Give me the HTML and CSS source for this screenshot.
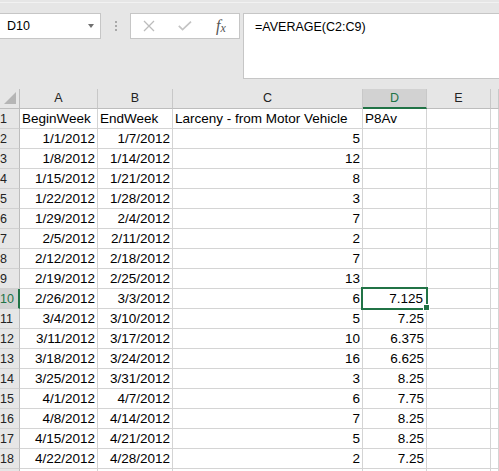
FILE: index.html
```html
<!DOCTYPE html>
<html lang="en">
<head>
  <meta charset="UTF-8">
  <title>Book1 - Excel</title>
  <link rel="stylesheet" href="styles.css">
</head>
<body>
  <!-- Ribbon edge -->
  <div class="ribbon-edge"></div>

  <!-- Name box + formula bar -->
  <div class="toolbar">
    <div class="name-box">
      <span>D10</span>
      <span class="caret"></span>
    </div>
    <div class="grip"><i></i><i></i><i></i></div>
    <div class="fx-buttons">
      <span class="btn">
        <svg width="12" height="12" viewBox="0 0 12 12"><path d="M1 1 L11 11 M11 1 L1 11" stroke="#bcbcbc" stroke-width="1.3" fill="none"/></svg>
      </span>
      <span class="btn">
        <svg width="14" height="10" viewBox="0 0 14 10"><path d="M0.8 4.8 L4.6 8.6 L13 0.6" stroke="#c4c4c4" stroke-width="1.7" fill="none"/></svg>
      </span>
      <span class="btn fx"><i>f<span>x</span></i></span>
    </div>
    <div class="formula">=AVERAGE(C2:C9)</div>
  </div>

  <!-- Sheet grid -->
  <div class="sheet">
    <div class="corner">
      <svg width="19" height="19" viewBox="0 0 19 19"><polygon points="16,3 16,15 4,15" fill="#b5b5b5"/></svg>
    </div>
    <div class="ch">A</div><div class="ch">B</div><div class="ch">C</div><div class="ch sel">D</div><div class="ch">E</div><div class="ch"></div>

    <div class="rh">1</div><div class="c">BeginWeek</div><div class="c">EndWeek</div><div class="c">Larceny - from Motor Vehicle</div><div class="c">P8Av</div><div class="c"></div><div class="c"></div>
    <div class="rh">2</div><div class="c r">1/1/2012</div><div class="c r">1/7/2012</div><div class="c r">5</div><div class="c r"></div><div class="c"></div><div class="c"></div>
    <div class="rh">3</div><div class="c r">1/8/2012</div><div class="c r">1/14/2012</div><div class="c r">12</div><div class="c r"></div><div class="c"></div><div class="c"></div>
    <div class="rh">4</div><div class="c r">1/15/2012</div><div class="c r">1/21/2012</div><div class="c r">8</div><div class="c r"></div><div class="c"></div><div class="c"></div>
    <div class="rh">5</div><div class="c r">1/22/2012</div><div class="c r">1/28/2012</div><div class="c r">3</div><div class="c r"></div><div class="c"></div><div class="c"></div>
    <div class="rh">6</div><div class="c r">1/29/2012</div><div class="c r">2/4/2012</div><div class="c r">7</div><div class="c r"></div><div class="c"></div><div class="c"></div>
    <div class="rh">7</div><div class="c r">2/5/2012</div><div class="c r">2/11/2012</div><div class="c r">2</div><div class="c r"></div><div class="c"></div><div class="c"></div>
    <div class="rh">8</div><div class="c r">2/12/2012</div><div class="c r">2/18/2012</div><div class="c r">7</div><div class="c r"></div><div class="c"></div><div class="c"></div>
    <div class="rh">9</div><div class="c r">2/19/2012</div><div class="c r">2/25/2012</div><div class="c r">13</div><div class="c r"></div><div class="c"></div><div class="c"></div>
    <div class="rh sel">10</div><div class="c r">2/26/2012</div><div class="c r">3/3/2012</div><div class="c r">6</div><div class="c r active">7.125<span class="sel-box"></span><span class="handle"></span></div><div class="c"></div><div class="c"></div>
    <div class="rh">11</div><div class="c r">3/4/2012</div><div class="c r">3/10/2012</div><div class="c r">5</div><div class="c r">7.25</div><div class="c"></div><div class="c"></div>
    <div class="rh">12</div><div class="c r">3/11/2012</div><div class="c r">3/17/2012</div><div class="c r">10</div><div class="c r">6.375</div><div class="c"></div><div class="c"></div>
    <div class="rh">13</div><div class="c r">3/18/2012</div><div class="c r">3/24/2012</div><div class="c r">16</div><div class="c r">6.625</div><div class="c"></div><div class="c"></div>
    <div class="rh">14</div><div class="c r">3/25/2012</div><div class="c r">3/31/2012</div><div class="c r">3</div><div class="c r">8.25</div><div class="c"></div><div class="c"></div>
    <div class="rh">15</div><div class="c r">4/1/2012</div><div class="c r">4/7/2012</div><div class="c r">6</div><div class="c r">7.75</div><div class="c"></div><div class="c"></div>
    <div class="rh">16</div><div class="c r">4/8/2012</div><div class="c r">4/14/2012</div><div class="c r">7</div><div class="c r">8.25</div><div class="c"></div><div class="c"></div>
    <div class="rh">17</div><div class="c r">4/15/2012</div><div class="c r">4/21/2012</div><div class="c r">5</div><div class="c r">8.25</div><div class="c"></div><div class="c"></div>
    <div class="rh">18</div><div class="c r">4/22/2012</div><div class="c r">4/28/2012</div><div class="c r">2</div><div class="c r">7.25</div><div class="c"></div><div class="c"></div>
    <div class="rh"></div><div class="c"></div><div class="c"></div><div class="c"></div><div class="c"></div><div class="c"></div><div class="c"></div>
  </div>
</body>
</html>
```

FILE: styles.css
```css
/* Reset */
* {
  margin: 0;
  padding: 0;
  box-sizing: border-box;
}

body {
  font-family: "Liberation Sans", Arial, sans-serif;
  background-color: #e6e6e6;
  color: #000;
  width: 499px;
  height: 471px;
  overflow: hidden;
}

/* Thin line under the ribbon */
.ribbon-edge {
  height: 3px;
  border-bottom: 1px solid #f2f2f2;
}

/* Name box / formula bar */
.toolbar {
  height: 86px;
  padding-top: 10px;
  display: flex;
  align-items: flex-start;
}

.name-box {
  width: 102px;
  height: 26px;
  margin-left: -1px;
  background-color: #fff;
  border: 1px solid #c6c6c6;
  display: flex;
  align-items: center;
  padding-left: 7px;
  font-size: 12.5px;
  line-height: 24px;
  color: #000;
}

.caret {
  margin-left: auto;
  margin-right: 6px;
  width: 0;
  height: 0;
  border-left: 3px solid transparent;
  border-right: 3px solid transparent;
  border-top: 4px solid #707070;
}

.grip {
  width: 29px;
  height: 26px;
  display: flex;
  flex-direction: column;
  align-items: center;
  justify-content: center;
  gap: 2px;
}

.grip i {
  width: 2px;
  height: 2px;
  background-color: #a9a9a9;
}

.fx-buttons {
  width: 110px;
  height: 26px;
  background-color: #fff;
  border: 1px solid #c6c6c6;
  display: flex;
}

.btn {
  width: 36px;
  display: flex;
  align-items: center;
  justify-content: center;
}

.fx i {
  font-family: "Liberation Serif", "Times New Roman", serif;
  font-size: 16px;
  color: #555;
  line-height: 16px;
}

.fx i span {
  font-size: 12px;
  position: relative;
  top: 1px;
}

.formula {
  flex: 1;
  height: 66px;
  margin-left: 3px;
  margin-right: -1px;
  background-color: #fff;
  border: 1px solid #c6c6c6;
  padding: 5px 0 0 11px;
  font-size: 12.5px;
  line-height: 16px;
}

/* Sheet */
.sheet {
  display: grid;
  grid-template-columns: 20px 78px 75px 190px 64px 64px 8px;
  grid-auto-rows: 20px;
}

.corner {
  background-color: #e6e6e6;
  border-right: 1px solid #bdbdbd;
  border-bottom: 1px solid #bdbdbd;
}

.corner svg {
  display: block;
}

.ch {
  background-color: #e6e6e6;
  border-right: 1px solid #c8c8c8;
  border-bottom: 1px solid #bdbdbd;
  text-align: center;
  font-size: 12.5px;
  line-height: 19px;
  color: #222;
}

.ch.sel {
  background-color: #d2d2d2;
  color: #217346;
  border-bottom: 2px solid #217346;
  line-height: 18px;
}

.rh {
  background-color: #e6e6e6;
  border-right: 1px solid #bdbdbd;
  border-bottom: 1px solid #d0d0d0;
  font-size: 12.5px;
  line-height: 18px;
  padding-top: 1px;
  color: #222;
}

.rh.sel {
  background-color: #d2d2d2;
  color: #217346;
  border-right: 2px solid #217346;
}

.c {
  background-color: #fff;
  border-right: 1px solid #d4d4d4;
  border-bottom: 1px solid #d4d4d4;
  padding: 1px 2px 0 2px;
  font-size: 13.5px;
  line-height: 18px;
  white-space: nowrap;
  overflow: hidden;
}

.r {
  text-align: right;
}

/* Active cell */
.active {
  position: relative;
  overflow: visible;
  padding-right: 3px;
}

.sel-box {
  position: absolute;
  left: -2px;
  top: -2px;
  width: 67px;
  height: 23px;
  border: 2px solid #217346;
  z-index: 1;
}

.handle {
  position: absolute;
  left: 61px;
  top: 16px;
  width: 5px;
  height: 5px;
  background-color: #217346;
  box-shadow: 0 0 0 1px #fff;
  z-index: 2;
}
```
